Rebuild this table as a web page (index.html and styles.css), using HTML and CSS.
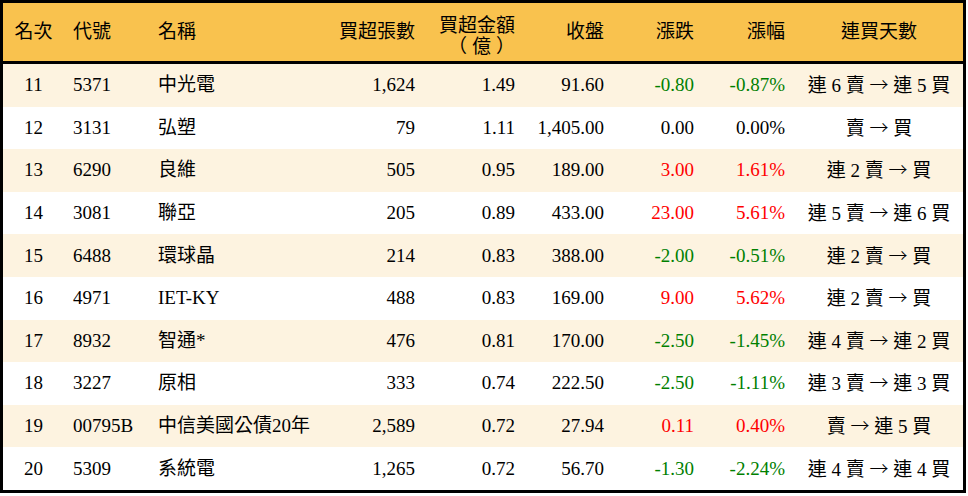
FILE: index.html
```html
<!DOCTYPE html>
<html lang="zh-Hant">
<head>
<meta charset="utf-8">
<link rel="stylesheet" href="styles.css">
</head>
<body>
<div class="frame">
<table class="rank">
  <colgroup>
    <col class="c-rank"><col class="c-code"><col class="c-name"><col class="c-vol"><col class="c-amt"><col class="c-close"><col class="c-chg"><col class="c-pct"><col class="c-days">
  </colgroup>
  <thead>
    <tr>
      <th class="ctr">名次</th>
      <th class="lft">代號</th>
      <th class="lft">名稱</th>
      <th class="num">買超張數</th>
      <th class="num two"><span class="ln">買超金額</span><span class="ln"><span class="pl">（</span>億<span class="pr">）</span></span></th>
      <th class="num">收盤</th>
      <th class="num">漲跌</th>
      <th class="num">漲幅</th>
      <th class="ctr">連買天數</th>
    </tr>
  </thead>
  <tbody>
    <tr><td class="ctr">11</td><td class="lft">5371</td><td class="lft">中光電</td><td class="num">1,624</td><td class="num">1.49</td><td class="num">91.60</td><td class="num dn">-0.80</td><td class="num dn">-0.87%</td><td class="ctr">連 6 賣 <span class="arr">→</span> 連 5 買</td></tr>
    <tr><td class="ctr">12</td><td class="lft">3131</td><td class="lft">弘塑</td><td class="num">79</td><td class="num">1.11</td><td class="num">1,405.00</td><td class="num">0.00</td><td class="num">0.00%</td><td class="ctr">賣 <span class="arr">→</span> 買</td></tr>
    <tr><td class="ctr">13</td><td class="lft">6290</td><td class="lft">良維</td><td class="num">505</td><td class="num">0.95</td><td class="num">189.00</td><td class="num up">3.00</td><td class="num up">1.61%</td><td class="ctr">連 2 賣 <span class="arr">→</span> 買</td></tr>
    <tr><td class="ctr">14</td><td class="lft">3081</td><td class="lft">聯亞</td><td class="num">205</td><td class="num">0.89</td><td class="num">433.00</td><td class="num up">23.00</td><td class="num up">5.61%</td><td class="ctr">連 5 賣 <span class="arr">→</span> 連 6 買</td></tr>
    <tr><td class="ctr">15</td><td class="lft">6488</td><td class="lft">環球晶</td><td class="num">214</td><td class="num">0.83</td><td class="num">388.00</td><td class="num dn">-2.00</td><td class="num dn">-0.51%</td><td class="ctr">連 2 賣 <span class="arr">→</span> 買</td></tr>
    <tr><td class="ctr">16</td><td class="lft">4971</td><td class="lft">IET-KY</td><td class="num">488</td><td class="num">0.83</td><td class="num">169.00</td><td class="num up">9.00</td><td class="num up">5.62%</td><td class="ctr">連 2 賣 <span class="arr">→</span> 買</td></tr>
    <tr><td class="ctr">17</td><td class="lft">8932</td><td class="lft">智通*</td><td class="num">476</td><td class="num">0.81</td><td class="num">170.00</td><td class="num dn">-2.50</td><td class="num dn">-1.45%</td><td class="ctr">連 4 賣 <span class="arr">→</span> 連 2 買</td></tr>
    <tr><td class="ctr">18</td><td class="lft">3227</td><td class="lft">原相</td><td class="num">333</td><td class="num">0.74</td><td class="num">222.50</td><td class="num dn">-2.50</td><td class="num dn">-1.11%</td><td class="ctr">連 3 賣 <span class="arr">→</span> 連 3 買</td></tr>
    <tr><td class="ctr">19</td><td class="lft">00795B</td><td class="lft">中信美國公債20年</td><td class="num">2,589</td><td class="num">0.72</td><td class="num">27.94</td><td class="num up">0.11</td><td class="num up">0.40%</td><td class="ctr">賣 <span class="arr">→</span> 連 5 買</td></tr>
    <tr><td class="ctr">20</td><td class="lft">5309</td><td class="lft">系統電</td><td class="num">1,265</td><td class="num">0.72</td><td class="num">56.70</td><td class="num dn">-1.30</td><td class="num dn">-2.24%</td><td class="ctr">連 4 賣 <span class="arr">→</span> 連 4 買</td></tr>
  </tbody>
</table>
</div>
</body>
</html>
```
FILE: styles.css
```css
html, body {
  margin: 0;
  padding: 0;
  background: #fff;
}
.frame {
  width: 960px;
  border: 3px solid #000;
}
.rank {
  width: 960px;
  table-layout: fixed;
  border-collapse: separate;
  border-spacing: 0;
  font-family: "Liberation Serif", "Noto Sans CJK TC", serif;
  font-size: 19px;
  color: #000;
}
.c-rank { width: 61px; }
.c-code { width: 86px; }
.c-name { width: 180px; }
.c-vol { width: 95px; }
.c-amt { width: 100px; }
.c-close { width: 89px; }
.c-chg { width: 90px; }
.c-pct { width: 91px; }
.c-days { width: 168px; }

.rank thead tr {
  height: 61px;
}
.rank th {
  background: #f9c24e;
  padding: 0;
  font-weight: normal;
  line-height: 20px;
  border-bottom: 3px solid #000;
  vertical-align: middle;
  white-space: nowrap;
}
.rank th.two {
  padding-top: 4px;
}
.ln {
  display: block;
  font-family: "Noto Sans CJK TC", sans-serif;
  line-height: 21px;
}
.pl {
  display: inline-block;
  margin-right: 5px;
}
.pr {
  display: inline-block;
  margin-left: 5px;
}
.rank td {
  height: 42.6px;
  padding: 0;
  line-height: 20px;
  vertical-align: middle;
  white-space: nowrap;
}
.rank tbody tr:nth-child(odd) td { background: #fdf3e0; }
.rank tbody tr:nth-child(even) td { background: #fff; }

.arr {
  font-family: "Noto Sans CJK TC", sans-serif;
  font-weight: 300;
}

.ctr { text-align: center; }
.lft { text-align: left; }
.rank td.lft:nth-child(2), .rank th.lft:nth-child(2) { padding-left: 9px; }
.rank td.lft:nth-child(3), .rank th.lft:nth-child(3) { padding-left: 8px; }
.num { text-align: right; padding-right: 10px !important; }
.up { color: #f00; }
.dn { color: #008000; }
```
